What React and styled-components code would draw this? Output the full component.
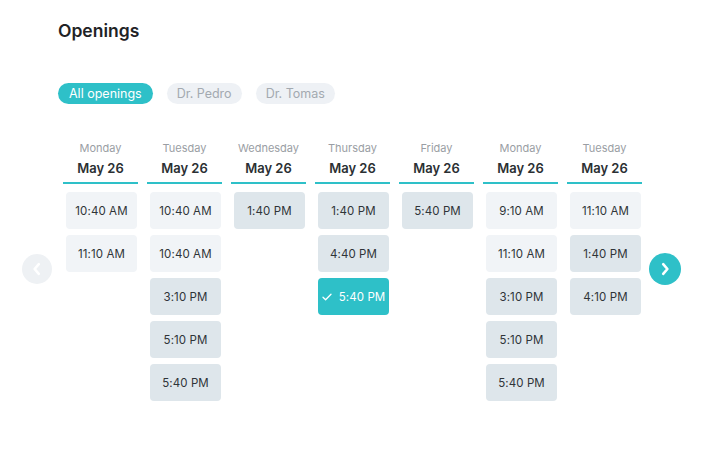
import React from 'react'
import styled, { createGlobalStyle } from 'styled-components'

const GlobalStyle = createGlobalStyle`
  body {
    margin: 0;
    background: #fff;
    font-family: Inter, "Noto Sans", sans-serif;
    color: #2b2f33;
  }
`

const teal = '#2ec0c8'

const Page = styled.div`
  padding: 20px 0 0 22px;
  width: 706px;
  box-sizing: border-box;
`

const Title = styled.h1`
  margin: 0 0 0 36px;
  font-size: 17.5px;
  line-height: 22px;
  font-weight: 600;
  color: #1f2326;
`

const Filters = styled.div`
  display: flex;
  gap: 14px;
  margin: 41px 0 0 36px;
`

const Chip = styled.button`
  border: 0;
  height: 21px;
  padding: 0 ${p => (p.$active ? '11px' : '10px')};
  border-radius: 11px;
  font-family: inherit;
  font-size: 12.5px;
  white-space: nowrap;
  background: ${p => (p.$active ? teal : '#eef1f5')};
  color: ${p => (p.$active ? '#fff' : '#a3a9b0')};
`

const Calendar = styled.div`
  display: flex;
  align-items: center;
  margin-top: 37px;
`

const Arrow = styled.button`
  flex: none;
  width: ${p => p.$size}px;
  height: ${p => p.$size}px;
  border-radius: 50%;
  border: 0;
  padding: 0;
  display: flex;
  align-items: center;
  justify-content: center;
  background: ${p => (p.$active ? teal : '#eef1f4')};
  margin-top: -4px;
`

const Columns = styled.div`
  display: flex;
  gap: 9px;
  margin: 0 7px 0 11px;
  align-self: flex-start;
`

const Column = styled.div`
  width: 75px;
  display: flex;
  flex-direction: column;
`

const DayName = styled.div`
  text-align: center;
  font-size: 11px;
  line-height: 14px;
  color: #9a9ea4;
`

const DateLabel = styled.div`
  text-align: center;
  font-size: 13px;
  line-height: 18px;
  font-weight: 600;
  margin-top: 4px;
  padding-bottom: 5px;
  border-bottom: 2px solid ${teal};
  color: #2b2f33;
`

const Slots = styled.div`
  display: flex;
  flex-direction: column;
  gap: 6px;
  padding: 8px 1px 0 3px;
`

const Slot = styled.button`
  height: 37px;
  border: 0;
  padding: 0;
  border-radius: 4px;
  font-family: inherit;
  font-size: 11.5px;
  letter-spacing: 0.1px;
  white-space: nowrap;
  display: flex;
  align-items: center;
  justify-content: center;
  gap: 7px;
  background: ${p => (p.$selected ? teal : p.$pm ? '#dee6eb' : '#f1f4f7')};
  color: ${p => (p.$selected ? '#fff' : '#2f3438')};
`

const days = [
  { name: 'Monday', slots: ['10:40 AM', '11:10 AM'] },
  { name: 'Tuesday', slots: ['10:40 AM', '10:40 AM', '3:10 PM', '5:10 PM', '5:40 PM'] },
  { name: 'Wednesday', slots: ['1:40 PM'] },
  { name: 'Thursday', slots: ['1:40 PM', '4:40 PM', '5:40 PM'], selected: 2 },
  { name: 'Friday', slots: ['5:40 PM'] },
  { name: 'Monday', slots: ['9:10 AM', '11:10 AM', '3:10 PM', '5:10 PM', '5:40 PM'] },
  { name: 'Tuesday', slots: ['11:10 AM', '1:40 PM', '4:10 PM'] },
]

const Chevron = ({ dir }) => (
  <svg width="16" height="16" viewBox="0 0 16 16" fill="none">
    <path
      d={dir === 'left' ? 'M9.8 3.2L5.6 8l4.2 4.8' : 'M6.2 3.2L10.4 8l-4.2 4.8'}
      stroke="#fff"
      strokeWidth="2.6"
      strokeLinecap="round"
      strokeLinejoin="round"
    />
  </svg>
)

const Check = () => (
  <svg width="10" height="10" viewBox="0 0 10 10" fill="none">
    <path d="M1 5.2l2.6 2.6L9 2.3" stroke="#fff" strokeWidth="1.3" strokeLinecap="round" strokeLinejoin="round" />
  </svg>
)

export default function App() {
  return (
    <Page>
      <GlobalStyle />
      <Title>Openings</Title>
      <Filters>
        <Chip $active>All openings</Chip>
        <Chip>Dr. Pedro</Chip>
        <Chip>Dr. Tomas</Chip>
      </Filters>
      <Calendar>
        <Arrow $size={30}>
          <Chevron dir="left" />
        </Arrow>
        <Columns>
          {days.map((d, i) => (
            <Column key={i}>
              <DayName>{d.name}</DayName>
              <DateLabel>May 26</DateLabel>
              <Slots>
                {d.slots.map((s, j) => (
                  <Slot key={j} $pm={s.endsWith('PM')} $selected={d.selected === j}>
                    {d.selected === j && <Check />}
                    {s}
                  </Slot>
                ))}
              </Slots>
            </Column>
          ))}
        </Columns>
        <Arrow $size={32} $active>
          <Chevron dir="right" />
        </Arrow>
      </Calendar>
    </Page>
  )
}
